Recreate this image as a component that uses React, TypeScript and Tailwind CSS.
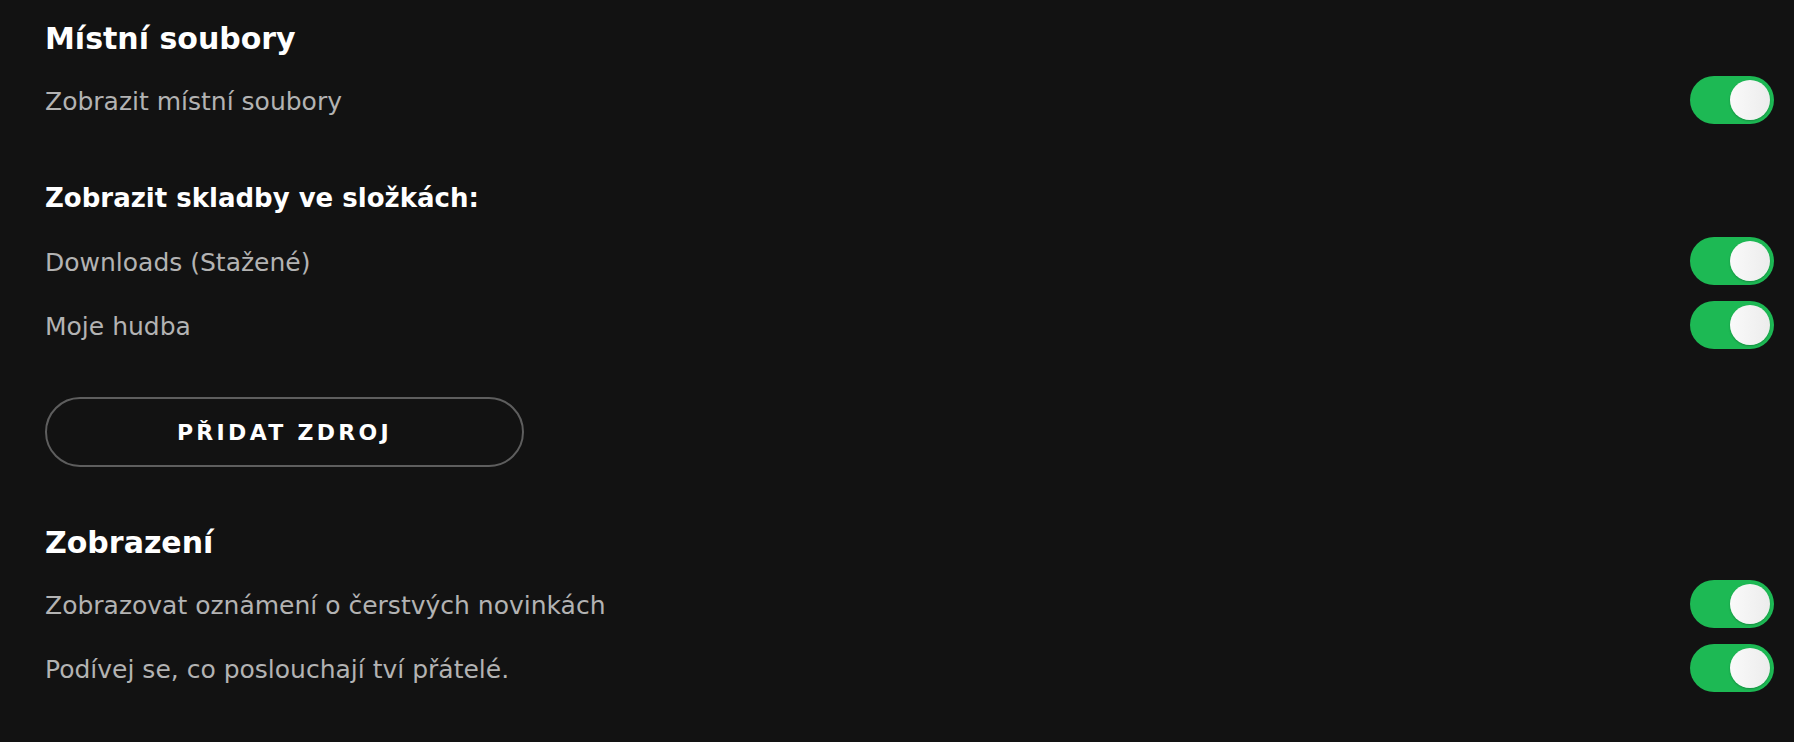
const font = { fontFamily: "'DejaVu Sans', Inter, sans-serif" };

function Toggle() {
  return (
    <div className="flex h-12 w-[84px] shrink-0 items-center justify-end rounded-full bg-[#1db954] p-1">
      <div className="h-10 w-10 rounded-full bg-gradient-to-r from-[#fafafa] to-[#ececec] shadow-[0_1px_2px_rgba(0,0,0,0.25)]" />
    </div>
  );
}

function Row({ label }: { label: string }) {
  return (
    <div className="flex h-16 items-center justify-between">
      <span className="pt-1 text-[25px] text-[#b3b3b3]">{label}</span>
      <Toggle />
    </div>
  );
}

export default function App() {
  return (
    <main
      className="min-h-[742px] w-full bg-[#121212] pl-[45px] pr-5 pt-1 antialiased"
      style={font}
    >
      {/* Local files */}
      <h2 className="flex h-16 items-center pt-1 text-[30px] font-bold text-white">Místní soubory</h2>
      <Row label="Zobrazit místní soubory" />

      {/* Folders */}
      <h3 className="mt-[33px] flex h-16 items-center pt-0.5 text-[26px] font-bold text-white">
        Zobrazit skladby ve složkách:
      </h3>
      <Row label="Downloads (Stažené)" />
      <Row label="Moje hudba" />

      <button className="mt-10 flex h-[70px] w-[479px] items-center justify-center rounded-full border-2 border-[#5e5e5e] text-[22px] font-bold tracking-[0.15em] text-white">
        PŘIDAT ZDROJ
      </button>

      {/* Display */}
      <h2 className="mt-[41px] flex h-16 items-center pt-1 text-[30px] font-bold text-white">Zobrazení</h2>
      <Row label="Zobrazovat oznámení o čerstvých novinkách" />
      <Row label="Podívej se, co poslouchají tví přátelé." />
    </main>
  );
}
